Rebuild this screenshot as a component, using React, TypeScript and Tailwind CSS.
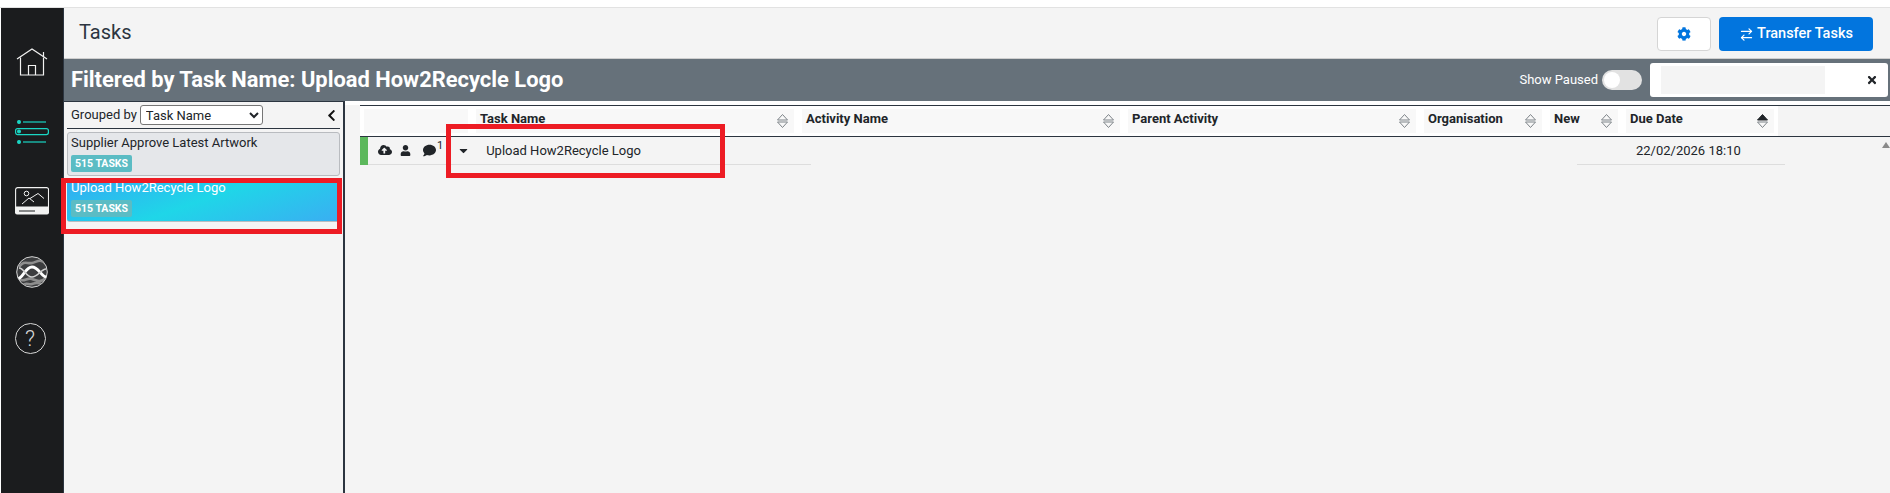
import { FaCaretDown, FaChevronLeft, FaCloudUploadAlt, FaCog, FaComment, FaTimes, FaUser } from "react-icons/fa";
import { ArrowRightLeft } from "lucide-react";

const columns = [
  { name: "Task Name", width: "w-[318px]" },
  { name: "Activity Name", width: "w-[318px]" },
  { name: "Parent Activity", width: "w-[288px]" },
  { name: "Organisation", width: "w-[118px]" },
  { name: "New", width: "w-[68px]" },
  { name: "Due Date", width: "w-[148px]", sorted: true },
];

function SortIcon({ active }: { active?: boolean }) {
  return (
    <svg width="13" height="16" viewBox="0 0 13 16" className="absolute right-[5px] top-[4px]">
      <path d="M1.500 7 6.500 1.500l5 5.500Z" fill={active ? "#212529" : "none"} stroke={active ? "#212529" : "#7d8388"} strokeWidth="1" />
      <path d="M1.500 9 6.500 14.500l5-5.500Z" fill="none" stroke="#7d8388" strokeWidth="1" />
    </svg>
  );
}

function HomeIcon() {
  return (
    <svg width="32" height="28" viewBox="0 0 32 28" fill="none" stroke="#f2f2f2" strokeWidth="1.200">
      <path d="M1 11 16 1l15 10" />
      <path d="M4.500 9.500V27h23V9.500M27.500 9V4" />
      <path d="M12.500 27V17.500h7V27" />
    </svg>
  );
}

function ListIcon() {
  return (
    <svg width="34" height="24" viewBox="0 0 34 24" fill="none" stroke="#1ad6c4" strokeWidth="1.200">
      <circle cx="4" cy="2" r="1.400" fill="#1ad6c4" />
      <path d="M8 2h23" />
      <rect x="0.600" y="8.600" width="32.800" height="6" rx="2" />
      <circle cx="4" cy="11.600" r="1.400" fill="#1ad6c4" />
      <circle cx="4" cy="22" r="1.400" fill="#1ad6c4" />
      <path d="M8 22h23" />
    </svg>
  );
}

function ImageIcon() {
  return (
    <svg width="34" height="28" viewBox="0 0 34 28">
      <path d="M2.500.6h29a2 2 0 0 1 2 2V20H.6V2.500A2 2 0 0 1 2.500.6Z" fill="#1b1c1e" stroke="#f2f2f2" strokeWidth="1.100" />
      <path d="M0 20h34v5.500a2 2 0 0 1-2 2H2a2 2 0 0 1-2-2Z" fill="#f2f2f2" />
      <path d="M4 24h16" stroke="#1b1c1e" strokeWidth="1" />
      <circle cx="11.500" cy="6.500" r="2.300" fill="none" stroke="#f2f2f2" strokeWidth="1" />
      <path d="M7 17l7-6 5 4M15 11.500l8-5 6 5" fill="none" stroke="#f2f2f2" strokeWidth="1" />
    </svg>
  );
}

function WaveIcon() {
  return (
    <svg width="32" height="32" viewBox="0 0 32 32" fill="none">
      <clipPath id="wave-clip">
        <circle cx="16" cy="16" r="15" />
      </clipPath>
      <circle cx="16" cy="16" r="15.300" fill="#3c3d3f" stroke="#d6d6d6" strokeWidth="1" />
      <g clipPath="url(#wave-clip)">
        <path d="M3 11c5-7 8-3 13-4s8-5 14 1M2 23c6 4 9-2 14 0s8 4 14-1M7 29c3-3 6 0 9-1s5-2 9 0" stroke="#8e8e8e" strokeWidth="2.600" />
        <path d="M1 23c6 0 8-12 15-12s9 10 15 10" stroke="#ffffff" strokeWidth="2.800" />
        <path d="M3 12c5 0 7 9 13 9s9-8 14-8" stroke="#d0d0d0" strokeWidth="1.600" />
      </g>
    </svg>
  );
}

function HelpIcon() {
  return (
    <div className="w-[31px] h-[31px] rounded-full border border-[#d6d6d6] flex items-center justify-center text-[#d6d6d6] text-[22px] font-light leading-none">
      ?
    </div>
  );
}

function TaskGroup({ title, active }: { title: string; active?: boolean }) {
  return (
    <div
      className={
        active
          ? "h-[44px] rounded-[3px] px-[4px] bg-[linear-gradient(160deg,#35a9f2_0%,#1fd6e8_50%,#3aaef2_100%)] text-white border-b border-[#b8bcc0]"
          : "h-[44px] rounded-[3px] px-[3px] bg-[#e5e7ea] text-[#212529] border border-[#b9bcc0]"
      }
    >
      <div className="text-[13px] leading-[20px] whitespace-nowrap">{title}</div>
      <div className="mt-[2px] w-[61px] h-[17px] rounded-[2px] bg-[#5bbcc4] text-white text-[10.500px] font-bold flex items-center justify-center">
        515 TASKS
      </div>
    </div>
  );
}

export default function App() {
  return (
    <div className="relative w-[1890px] h-[493px] overflow-hidden bg-white font-['Roboto',sans-serif] text-[#212529]">
      <div className="h-[8px] border-b border-[#e2e2e2]" />
      <div className="flex h-[485px]">
        {/* Side nav */}
        <nav className="ml-px w-[63px] shrink-0 bg-[#1b1c1e] border-r border-[#2c3540] relative">
          <div className="flex flex-col items-center pt-[40px] pr-[1px]">
            <HomeIcon />
            <div className="mt-[44px]"><ListIcon /></div>
            <div className="mt-[43px]"><ImageIcon /></div>
            <div className="mt-[41px]"><WaveIcon /></div>
            <div className="mt-[35px] mr-[3px]"><HelpIcon /></div>
          </div>
        </nav>

        <div className="flex-1 min-w-0 flex flex-col">
          {/* Page header */}
          <div className="h-[51px] bg-[#f4f4f4] border-b border-[#cfcfcf] flex items-start justify-between pl-[15px] pr-[17px]">
            <h1 className="text-[20px] leading-[24px] pt-[12px] text-[#2c3540]">Tasks</h1>
            <div className="flex gap-[8px] pt-[9px]">
              <button className="w-[54px] h-[34px] bg-white border border-[#d5d5d5] rounded-[4px] flex items-center justify-center text-[#0275de]">
                <FaCog size={14} />
              </button>
              <button className="w-[154px] h-[34px] bg-[#0275de] rounded-[4px] text-white text-[14.500px] font-medium flex items-center justify-center gap-[3px]">
                <ArrowRightLeft size={15} strokeWidth={2} />
                Transfer Tasks
              </button>
            </div>
          </div>

          {/* Filter bar */}
          <div className="h-[42px] bg-[#66717a] flex items-center pl-[7px] pr-[2px]">
            <div className="text-white text-[21.900px] font-bold whitespace-nowrap">Filtered by Task Name: Upload How2Recycle Logo</div>
            <div className="ml-auto text-white text-[13px] whitespace-nowrap">Show Paused</div>
            <div className="ml-[4px] w-[40px] h-[20px] rounded-full bg-[#e2e2e2] flex items-center pl-[2px]">
              <div className="w-[16px] h-[16px] rounded-full bg-white" />
            </div>
            <div className="ml-[8px] w-[238px] h-[34px] bg-white rounded-[3px] flex items-center pl-[11px] pr-[10px] justify-between">
              <div className="w-[164px] h-[28px] bg-[#f4f4f4]" />
              <FaTimes size={12} className="text-[#212529]" />
            </div>
          </div>

          <div className="flex-1 flex min-h-0">
            {/* Groups panel */}
            <aside className="w-[281px] shrink-0 bg-[#f4f4f4] border-r-2 border-[#2c3540] border-t border-t-[#2c3540] px-[3px] pt-[3px]">
              <div className="h-[24px] border-b border-[#2c3540] flex items-start pl-[4px] pr-[2px]">
                <span className="text-[13px] leading-[20px] whitespace-nowrap">Grouped by</span>
                <select className="ml-[3px] w-[123px] h-[20px] bg-white border border-[#767676] rounded-[3px] text-[13px] pl-[1px] leading-none">
                  <option>Task Name</option>
                </select>
                <FaChevronLeft size={13} className="ml-auto mt-[4px] text-[#111]" />
              </div>
              <div className="mt-[3px] flex flex-col gap-[2px]">
                <TaskGroup title="Supplier Approve Latest Artwork" />
                <TaskGroup title="Upload How2Recycle Logo" active />
              </div>
            </aside>

            {/* Task table */}
            <main className="flex-1 min-w-0 bg-[#f4f4f4] relative">
              <div className="h-[4px] bg-white" />
              <div className="ml-[15px] border-y border-[#2c3540] h-[32px]">
                <div className="w-[1418px] h-[30px] bg-white flex gap-[8px] pl-[4px] pt-[3px]">
                  <div className="w-[104px] h-[24px] bg-[#f8f8f8]" />
                  {columns.map((c) => (
                    <div key={c.name} className={`${c.width} h-[24px] bg-[#f8f8f8] relative pl-[4px] text-[13px] leading-[20px] font-bold whitespace-nowrap`}>
                      {c.name}
                      <SortIcon active={c.sorted} />
                    </div>
                  ))}
                </div>
              </div>
              <div className="ml-[15px] h-[28px] flex text-[13px]">
                <div className="w-[8px] bg-[#5cb85c]" />
                <div className="w-[443px] border-b border-[#dddddd] flex items-center text-[#212529] pb-[1px]">
                  <FaCloudUploadAlt size={14} className="ml-[10px]" />
                  <FaUser size={11} className="ml-[8px]" />
                  <FaComment size={13} className="ml-[12px]" />
                  <span className="text-[11px] leading-none -mt-[10px] ml-[1px]">1</span>
                  <FaCaretDown size={13} className="ml-[14px]" />
                  <span className="ml-[16px] mt-[1px] whitespace-nowrap">Upload How2Recycle Logo</span>
                </div>
                <div className="ml-[766px] w-[208px] border-b border-[#dddddd] pl-[59px] leading-[27px] whitespace-nowrap">22/02/2026 18:10</div>
              </div>
              <div className="absolute right-[0px] top-[41px] w-0 h-0 border-x-[4px] border-x-transparent border-b-[6px] border-b-[#8a8a8a]" />
            </main>
          </div>
        </div>
      </div>

      {/* Red annotation boxes */}
      <div className="absolute left-[61px] top-[178px] w-[281px] h-[56px] border-[5px] border-[#ed1c24]" />
      <div className="absolute left-[446px] top-[124px] w-[279px] h-[54px] border-[5px] border-[#ed1c24]" />
    </div>
  );
}
